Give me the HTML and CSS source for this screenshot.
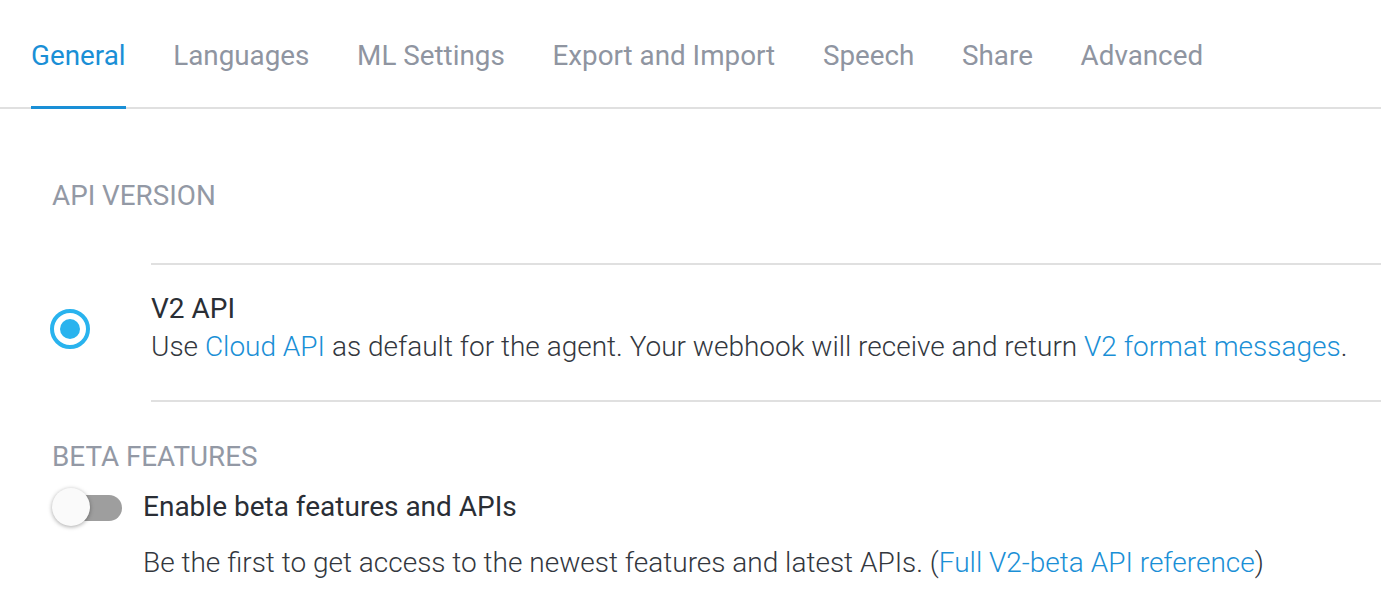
FILE: index.html
```html
<!DOCTYPE html>
<html>
<head>
<meta charset="utf-8">
<link rel="stylesheet" href="styles.css">
</head>
<body>
<nav class="tabs">
  <a class="tab active">General</a>
  <a class="tab">Languages</a>
  <a class="tab">ML Settings</a>
  <a class="tab">Export and Import</a>
  <a class="tab">Speech</a>
  <a class="tab">Share</a>
  <a class="tab">Advanced</a>
</nav>
<main class="content">
  <h2 class="section-title api-title">API VERSION</h2>
  <div class="option">
    <div class="radio-col">
      <svg class="radio" width="42" height="42" viewBox="0 0 42 42">
        <circle cx="21" cy="21" r="18" fill="none" stroke="#29b3ee" stroke-width="4"/>
        <circle cx="21" cy="21" r="10" fill="#29b3ee"/>
      </svg>
    </div>
    <div class="option-body">
      <div class="option-title">V2 API</div>
      <div class="option-desc">Use <a class="link">Cloud API</a> as default for the agent. Your webhook will receive and return <a class="link">V2 format messages</a>.</div>
    </div>
  </div>
  <h2 class="section-title beta-title">BETA FEATURES</h2>
  <div class="toggle-row">
    <div class="switch"><span class="track"></span><span class="knob"></span></div>
    <div class="toggle-label">Enable beta features and APIs</div>
  </div>
  <p class="beta-desc">Be the first to get access to the newest features and latest APIs. (<a class="link">Full V2-beta API reference</a>)</p>
</main>
</body>
</html>
```
FILE: styles.css
```css
html, body {
  margin: 0;
  padding: 0;
  background: #ffffff;
  font-family: Roboto, "Liberation Sans", sans-serif;
  overflow: hidden;
}
.tabs {
  display: flex;
  gap: 47.7px;
  padding-left: 31px;
  border-bottom: 2px solid #e0e0e0;
  box-sizing: border-box;
  height: 109px;
}
.tab {
  position: relative;
  font-size: 27.8px;
  color: #8f95a1;
  padding-top: 40px;
  line-height: 32px;
}
.tab.active {
  color: #1a8fd6;
}
.tab.active::after {
  content: "";
  position: absolute;
  left: 0;
  right: 0;
  bottom: -2px;
  height: 3px;
  background: #1a8fd6;
}
.content {
  padding-left: 52px;
}
.section-title {
  margin: 0;
  font-weight: 400;
  font-size: 27.8px;
  color: #9399a5;
  line-height: 32px;
}
.api-title {
  padding-top: 71px;
}
.option {
  display: flex;
  margin-top: 51px;
  border-top: 2px solid #e0e0e0;
  border-bottom: 2px solid #e0e0e0;
  margin-left: 99px;
  position: relative;
  height: 139px;
  box-sizing: border-box;
}
.radio-col {
  position: absolute;
  left: -102px;
  top: 43px;
}
.radio { display: block; }
.option-body {
  padding-top: 26px;
}
.option-title {
  font-size: 28px;
  color: #2a2e35;
  line-height: 36px;
}
.option-desc {
  font-size: 28px;
  font-weight: 300;
  color: #33373e;
  line-height: 40px;
  white-space: nowrap;
}
.link {
  color: #1a8fd6;
  text-decoration: none;
}
.beta-title {
  padding-top: 39px;
}
.toggle-row {
  display: flex;
  align-items: center;
  margin-top: 14px;
  gap: 21px;
}
.switch {
  position: relative;
  width: 70px;
  height: 40px;
}
.track {
  position: absolute;
  left: 4px;
  top: 8px;
  width: 66px;
  height: 26px;
  border-radius: 13px;
  background: #9e9e9e;
}
.knob {
  position: absolute;
  left: 0;
  top: 1px;
  width: 38px;
  height: 38px;
  border-radius: 50%;
  background: #fafafa;
  box-shadow: 0 1px 4px rgba(0,0,0,0.35);
}
.toggle-label {
  font-size: 28px;
  color: #2a2e35;
  line-height: 36px;
}
.beta-desc {
  margin: 18px 0 0 91px;
  font-size: 28px;
  font-weight: 300;
  color: #33373e;
  line-height: 36px;
  white-space: nowrap;
}
```
